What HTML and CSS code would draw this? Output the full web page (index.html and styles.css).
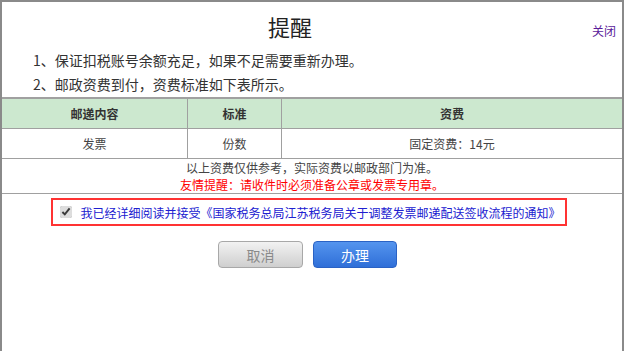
FILE: index.html
```html
<!DOCTYPE html>
<html lang="zh-CN">
<head>
    <meta charset="UTF-8">
    <title>提醒</title>
    <link rel="stylesheet" href="styles.css">
</head>
<body>

    <div class="dialog">
        <div class="dialog-head">
            <h1 class="title">提醒</h1>
            <a class="close" href="#">关闭</a>
        </div>

        <div class="notes">
            <p>1、保证扣税账号余额充足，如果不足需要重新办理。</p>
            <p>2、邮政资费到付，资费标准如下表所示。</p>
        </div>

        <table class="fee-table">
            <thead>
                <tr>
                    <th class="col-content">邮递内容</th>
                    <th class="col-unit">标准</th>
                    <th>资费</th>
                </tr>
            </thead>
            <tbody>
                <tr>
                    <td>发票</td>
                    <td>份数</td>
                    <td>固定资费：14元</td>
                </tr>
                <tr>
                    <td class="remark" colspan="3">
                        以上资费仅供参考，实际资费以邮政部门为准。<br>
                        <span class="warn">友情提醒：请收件时必须准备公章或发票专用章。</span>
                    </td>
                </tr>
            </tbody>
        </table>

        <div class="agree-row">
            <label class="agree">
                <input type="checkbox" checked>
                <span>我已经详细阅读并接受《国家税务总局江苏税务局关于调整发票邮递配送签收流程的通知》</span>
            </label>
        </div>

        <div class="buttons">
            <button class="btn btn-cancel">取消</button>
            <button class="btn btn-ok">办理</button>
        </div>
    </div>

</body>
</html>
```

FILE: styles.css
```css
html, body {
    margin: 0;
    padding: 0;
    background: #fff;
}
body {
    font-family: "Noto Sans CJK SC", "Liberation Sans", sans-serif;
    color: #333;
}
.dialog {
    box-sizing: border-box;
    height: 351px;
    border: 2px solid #8a8a8a;
    border-bottom: none;
}
.dialog-head {
    display: flex;
    align-items: baseline;
    padding-top: 9px;
}
.title {
    flex: 1;
    margin: 0;
    text-align: center;
    font-size: 22px;
    font-weight: normal;
    line-height: 30px;
    color: #222;
}
.close {
    padding: 0 6px 0 14px;
    font-size: 12px;
    color: #5a1a9a;
    text-decoration: none;
}
.notes {
    padding: 7px 0 1px 31px;
}
.notes p {
    margin: 0;
    font-size: 14px;
    line-height: 24px;
    color: #333;
}
.fee-table {
    width: 100%;
    border-collapse: collapse;
    font-size: 12px;
    text-align: center;
}
.fee-table th, .fee-table td {
    border: 1px solid #a0a0a0;
    padding: 0;
}
.fee-table tr:first-child th {
    border-top-width: 2px;
}
.fee-table th:first-child, .fee-table td:first-child {
    border-left: none;
}
.fee-table th:last-child, .fee-table td:last-child {
    border-right: none;
}
.fee-table th {
    height: 29px;
    background: #cce8cf;
    font-weight: bold;
    color: #333;
}
.fee-table td {
    height: 29px;
    color: #444;
}
.col-content {
    width: 185px;
}
.col-unit {
    width: 93px;
}
.fee-table td.remark {
    height: auto;
    line-height: 17px;
    padding-bottom: 0;
}
.warn {
    color: #f00;
}
.agree-row {
    text-align: center;
    margin-top: 4px;
    padding-right: 6px;
}
.agree {
    display: inline-flex;
    align-items: center;
    height: 24px;
    padding: 0 4px 0 7px;
    border: 2px solid #f33;
    font-size: 12px;
    color: #2020d0;
}
.agree input {
    width: 12px;
    height: 12px;
    margin: 0 8px 0 0;
    accent-color: #ddd;
}
.buttons {
    display: flex;
    justify-content: center;
    gap: 10px;
    margin-top: 15px;
    padding-right: 9px;
}
.btn {
    width: 85px;
    height: 27px;
    border-radius: 4px;
    font-family: inherit;
    font-size: 14px;
    cursor: pointer;
}
.btn-cancel {
    border: 1px solid #a8a8a8;
    background: linear-gradient(#f2f2f2, #cfcfcf);
    color: #8a8a8a;
}
.btn-ok {
    width: 84px;
    border: 1px solid #2a62c4;
    background: linear-gradient(#5494ee, #2f6fd8);
    color: #fff;
}
```
